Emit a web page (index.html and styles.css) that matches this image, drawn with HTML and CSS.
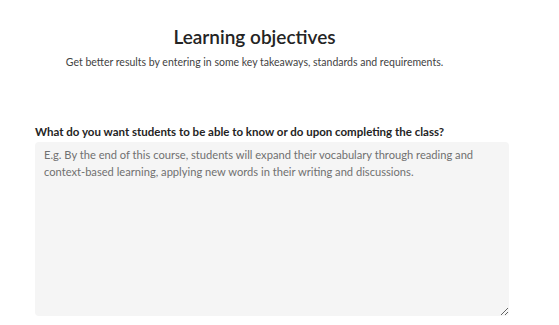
FILE: index.html
```html
<!DOCTYPE html>
<html lang="en">
<head>
<meta charset="utf-8">
<title>Learning objectives</title>
<link rel="stylesheet" href="styles.css">
</head>
<body>
<main class="page">
  <header class="intro">
    <h1 class="title">Learning objectives</h1>
    <p class="subtitle">Get better results by entering in some key takeaways, standards and requirements.</p>
  </header>
  <form class="form">
    <label class="label" for="objectives">What do you want students to be able to know or do upon completing the class?</label>
    <textarea class="field" id="objectives" placeholder="E.g. By the end of this course, students will expand their vocabulary through reading and context-based learning, applying new words in their writing and discussions."></textarea>
  </form>
</main>
</body>
</html>
```
FILE: styles.css
```css
html, body {
  margin: 0;
  padding: 0;
  background: #ffffff;
}

body {
  font-family: "Lato", "Open Sans", sans-serif;
  color: #242424;
}

.page {
  width: 509px;
}

.intro {
  display: flex;
  flex-direction: column;
  align-items: center;
  padding-top: 25px;
}

.title {
  margin: 0;
  font-size: 19px;
  line-height: 24px;
  font-weight: 600;
  color: #242424;
}

.subtitle {
  margin: 5px 0 0;
  font-size: 10.5px;
  line-height: 16px;
  color: #424242;
}

.form {
  display: flex;
  flex-direction: column;
  margin: 54px 0 0 35px;
}

.label {
  font-size: 11.5px;
  line-height: 16px;
  font-weight: 700;
  color: #242424;
}

.field {
  box-sizing: border-box;
  margin-top: 2px;
  width: 474px;
  height: 174px;
  padding: 4px 9px;
  border: none;
  border-radius: 4px;
  background: #f5f5f5;
  font-family: "Lato", "Open Sans", sans-serif;
  font-size: 11.15px;
  line-height: 17px;
  color: #242424;
  outline: none;
}

.field::placeholder {
  color: #707070;
  opacity: 1;
}
```
